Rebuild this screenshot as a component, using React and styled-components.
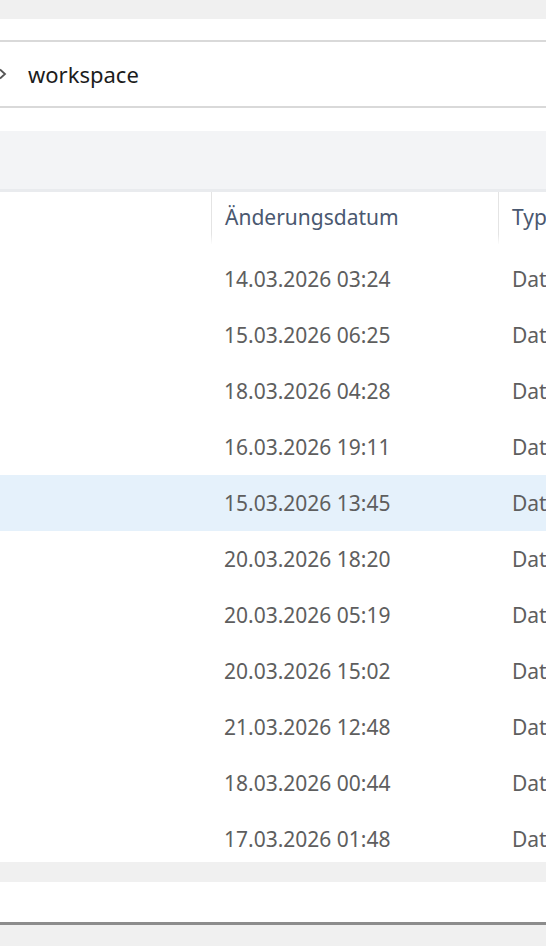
import styled, { createGlobalStyle } from 'styled-components';

const GlobalStyle = createGlobalStyle`
    html, body {
        margin: 0;
        padding: 0;
        background: #ffffff;
        font-family: "Noto Sans", "Open Sans", sans-serif;
    }
`;

const Page = styled.div`
    width: 546px;
    height: 946px;
    display: flex;
    flex-direction: column;
    overflow: hidden;
    background: #ffffff;
`;

const Band = styled.div`
    flex: none;
    height: ${(p) => p.h}px;
    background: ${(p) => p.bg || '#ffffff'};
`;

const AddressBar = styled.div`
    flex: none;
    height: 64px;
    border-top: 2px solid #d9d9d9;
    border-bottom: 2px solid #d9d9d9;
    display: flex;
    align-items: center;
    gap: 21px;
    font-size: 22px;
    color: #1c1c1c;

    .chevron {
        display: flex;
        align-items: center;
        margin-left: -1px;
    }
`;

const Toolbar = styled.div`
    flex: none;
    height: 58px;
    background: #f3f4f6;
    border-bottom: 3px solid #e9ebee;
`;

const List = styled.div`
    flex: none;
    height: 670px;
    overflow: hidden;
`;

const HeaderRow = styled.div`
    display: grid;
    grid-template-columns: 211px 287px 1fr;
    height: 59px;
`;

const HeaderCell = styled.div`
    display: flex;
    align-items: flex-start;
    padding: 11px 0 0 13px;
    font-size: 21px;
    color: #4a5870;
    white-space: nowrap;
    overflow: hidden;
    border-left: ${(p) => (p.divider ? '1px solid transparent' : 'none')};
    border-image: ${(p) =>
        p.divider ? 'linear-gradient(to bottom, #e4e4e4 80%, rgba(228,228,228,0)) 1' : 'none'};
    height: 52px;
    box-sizing: border-box;
`;

const Row = styled.div`
    display: grid;
    grid-template-columns: 211px 287px 1fr;
    height: 56px;
    align-items: center;
    background: ${(p) => (p.selected ? '#e5f1fb' : '#ffffff')};
`;

const Cell = styled.div`
    padding-left: ${(p) => p.pad || 13}px;
    font-size: 21px;
    color: #5e5e5e;
    white-space: nowrap;
    overflow: hidden;
`;

const dates = [
    '14.03.2026 03:24',
    '15.03.2026 06:25',
    '18.03.2026 04:28',
    '16.03.2026 19:11',
    '15.03.2026 13:45',
    '20.03.2026 18:20',
    '20.03.2026 05:19',
    '20.03.2026 15:02',
    '21.03.2026 12:48',
    '18.03.2026 00:44',
    '17.03.2026 01:48'
];

export default function App() {
    return (
        <>
            <GlobalStyle />
            <Page>
                <Band h={19} bg='#f0f0f0' />
                <Band h={21} />
                <AddressBar>
                    <span className='chevron'>
                        <svg width='8' height='12' viewBox='0 0 8 12'>
                            <path d='M1 1.5 L6 6 L1 10.5' fill='none' stroke='#555' strokeWidth='1.8' />
                        </svg>
                    </span>
                    <span>workspace</span>
                </AddressBar>
                <Band h={23} />
                <Toolbar />
                <List>
                    <HeaderRow>
                        <HeaderCell />
                        <HeaderCell divider>Änderungsdatum</HeaderCell>
                        <HeaderCell divider>Typ</HeaderCell>
                    </HeaderRow>
                    {dates.map((d, i) => (
                        <Row key={i} selected={i === 4}>
                            <Cell />
                            <Cell>{d}</Cell>
                            <Cell pad={14}>Dateiordner</Cell>
                        </Row>
                    ))}
                </List>
                <Band h={20} bg='#f0f0f0' />
                <Band h={40} />
                <Band h={3} bg='#8c8c8c' />
                <Band h={21} bg='#f0f0f0' />
            </Page>
        </>
    );
}
